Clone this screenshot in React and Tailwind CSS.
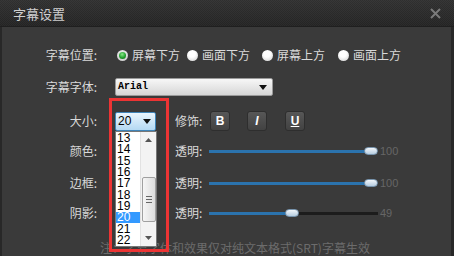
import React from "react";

function Radio({ checked }) {
  if (checked) {
    return (
      <span className="w-[11px] h-[11px] rounded-full bg-[radial-gradient(circle_at_50%_40%,#ffffff,#bdbdbd)] flex items-center justify-center shrink-0">
        <span className="w-[7px] h-[7px] rounded-full bg-[radial-gradient(circle_at_45%_35%,#8ae88a,#22a22e_55%,#0f5e16)]" />
      </span>
    );
  }
  return (
    <span className="w-[11px] h-[11px] rounded-full bg-[radial-gradient(circle_at_45%_35%,#ffffff_35%,#cfcfcf_95%)] shrink-0" />
  );
}

function Slider({ value }) {
  const thumbLeft = (value / 100) * 154;
  return (
    <div className="relative w-[169px] h-[3px] bg-[#1c1c1c]">
      <div className="h-full bg-[#2b73ad]" style={{ width: thumbLeft + 4 + "px" }} />
      <div
        className="absolute top-[-3px] w-[14px] h-[8px] rounded-full bg-[linear-gradient(#f2f6fa,#b7cde0)] border border-[#7894ad]"
        style={{ left: thumbLeft + 1 + "px" }}
      />
    </div>
  );
}

function SliderRow({ label, value, mt }) {
  return (
    <div className={"flex items-center h-[20px] " + mt}>
      <span className="w-[95px] text-right">{label}</span>
      <span className="ml-[18px] w-[41px]" />
      <span className="ml-[19px] w-[34px]">透明:</span>
      <Slider value={value} />
      <span className="ml-[2px] text-[11px] text-[#666666] font-['Liberation_Sans',sans-serif]">{value}</span>
    </div>
  );
}

export default function App() {
  const items = [13, 14, 15, 16, 17, 18, 19, 20, 21, 22];
  return (
    <div className="relative w-[454px] h-[256px] overflow-hidden bg-[#3a3a3a] font-['Noto_Sans_CJK_SC',sans-serif] text-[12px] text-[#d9d9d9] leading-none">
      {/* title bar */}
      <div className="h-[27px] flex items-center justify-between pl-[13px] pr-[13px] bg-[linear-gradient(rgba(255,255,255,0.03),rgba(0,0,0,0.12)),repeating-conic-gradient(#313131_0%_25%,#292929_0%_50%)] bg-[length:100%_100%,2px_2px] border-b border-[#1f1f1f]">
        <span className="text-[13px] text-[#cfcfcf]">字幕设置</span>
        <svg width="11" height="11" viewBox="0 0 11 11">
          <path d="M1 1L10 10M10 1L1 10" stroke="#7a7a7a" strokeWidth="2" />
        </svg>
      </div>

      {/* body */}
      <div className="flex flex-col border-l-2 border-r-[3px] border-[#282828] h-[229px]">
        <div className="flex items-center h-[20px] mt-[18px]">
          <span className="w-[95px] text-right">字幕位置:</span>
          <span className="ml-[20px] flex items-center">
            <Radio checked />
            <span className="ml-[4px]">屏幕下方</span>
          </span>
          <span className="ml-[7px] flex items-center">
            <Radio />
            <span className="ml-[4px]">画面下方</span>
          </span>
          <span className="ml-[12px] flex items-center">
            <Radio />
            <span className="ml-[4px]">屏幕上方</span>
          </span>
          <span className="ml-[13px] flex items-center">
            <Radio />
            <span className="ml-[4px]">画面上方</span>
          </span>
        </div>

        <div className="flex items-center h-[20px] mt-[12px]">
          <span className="w-[95px] text-right">字幕字体:</span>
          <div className="ml-[18px] w-[158px] h-[18px] rounded-[2px] bg-[linear-gradient(#f7f7f7,#d6d6d6)] border border-[#9a9a9a] flex items-center justify-between pl-[2px] pr-[5px]">
            <span className="font-['Liberation_Mono',monospace] text-[10px] text-black font-bold">Arial</span>
            <svg width="8" height="5" viewBox="0 0 8 5"><path d="M0 0H8L4 5Z" fill="#111" /></svg>
          </div>
        </div>

        <div className="flex items-center h-[20px] mt-[14px]">
          <span className="w-[95px] text-right">大小:</span>
          <div className="ml-[18px] w-[41px] h-[19px] rounded-[2px] bg-[linear-gradient(#eaf5fd,#b4d9f3)] border border-[#3f84b8] flex items-center justify-between pl-[2px] pr-[4px]">
            <span className="font-['Liberation_Sans',sans-serif] text-[12px] text-black">20</span>
            <svg width="8" height="5" viewBox="0 0 8 5"><path d="M0 0H8L4 5Z" fill="#111" /></svg>
          </div>
          <span className="ml-[19px] w-[35px]">修饰:</span>
          <span className="w-[20px] h-[20px] rounded-[3px] bg-[linear-gradient(#575757,#424242)] border border-[#2e2e2e] flex items-center justify-center text-white font-bold font-['Liberation_Sans',sans-serif] text-[12px]">B</span>
          <span className="ml-[17px] w-[20px] h-[20px] rounded-[3px] bg-[linear-gradient(#575757,#424242)] border border-[#2e2e2e] flex items-center justify-center text-white font-bold italic font-['Liberation_Sans',sans-serif] text-[12px]">I</span>
          <span className="ml-[18px] w-[20px] h-[20px] rounded-[3px] bg-[linear-gradient(#575757,#424242)] border border-[#2e2e2e] flex items-center justify-center text-white font-bold underline font-['Liberation_Sans',sans-serif] text-[12px]">U</span>
        </div>

        <SliderRow label="颜色:" value={100} mt="mt-[10px]" />
        <SliderRow label="边框:" value={100} mt="mt-[12px]" />
        <SliderRow label="阴影:" value={49} mt="mt-[10px]" />

        <div className="flex mt-[19px]">
          <span className="ml-[98px] text-[#6c6c6c] whitespace-nowrap">注：字幕字体和效果仅对纯文本格式(SRT)字幕生效</span>
        </div>
      </div>

      {/* dropdown list overlay */}
      <div className="absolute left-[115px] top-[131px] w-[42px] h-[116px] bg-white border border-[#777777] flex">
        <div className="flex flex-col w-[24px] pt-[1px]">
          {items.map((n) => (
            <div
              key={n}
              className={
                "h-[11.4px] leading-[11px] flex items-center pl-[1px] font-['Liberation_Sans',sans-serif] text-[12px] " +
                (n === 20 ? "bg-[#3399ff] text-white" : "text-black")
              }
            >
              {n}
            </div>
          ))}
        </div>
        <div className="w-[16px] flex flex-col items-center bg-[#f3f3f3] border-l border-[#e2e2e2]">
          <div className="h-[16px] flex items-center justify-center">
            <svg width="7" height="4" viewBox="0 0 7 4"><path d="M0 4H7L3.5 0Z" fill="#555" /></svg>
          </div>
          <div className="mt-[29px] w-[14px] h-[45px] rounded-[2px] bg-[linear-gradient(90deg,#f6f6f6,#dcdcdc)] border border-[#a0a0a0] flex flex-col items-center justify-center gap-[2px]">
            <span className="w-[6px] h-px bg-[#666]" />
            <span className="w-[6px] h-px bg-[#666]" />
            <span className="w-[6px] h-px bg-[#666]" />
          </div>
          <div className="mt-auto h-[16px] flex items-center justify-center">
            <svg width="7" height="4" viewBox="0 0 7 4"><path d="M0 0H7L3.5 4Z" fill="#555" /></svg>
          </div>
        </div>
      </div>

      {/* red highlight rectangle */}
      <div className="absolute left-[109px] top-[98px] w-[60px] h-[154px] border-[3px] border-[#ec3434]" />
    </div>
  );
}
